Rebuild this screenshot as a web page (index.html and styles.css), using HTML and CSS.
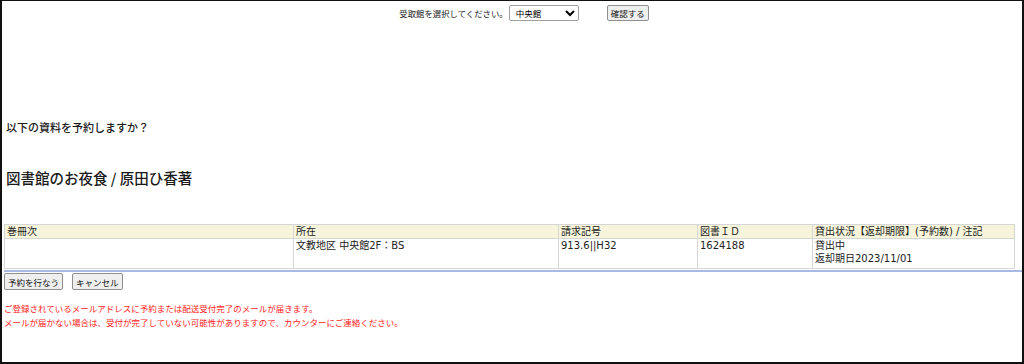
FILE: index.html
```html
<!DOCTYPE html>
<html lang="ja">
<head>
<meta charset="utf-8">
<title>予約確認</title>
<link rel="stylesheet" href="styles.css">
</head>
<body>
<div class="frame">
  <div class="topbar">
    <span class="label">受取館を選択してください。</span>
    <select class="lib-select">
      <option>中央館</option>
    </select>
    <button class="btn confirm">確認する</button>
  </div>

  <p class="question">以下の資料を予約しますか？</p>

  <h1 class="title">図書館のお夜食 / 原田ひ香著</h1>

  <table class="holdings">
    <colgroup>
      <col class="c1"><col class="c2"><col class="c3"><col class="c4"><col class="c5">
    </colgroup>
    <thead>
      <tr>
        <th>巻冊次</th>
        <th>所在</th>
        <th>請求記号</th>
        <th>図書ＩＤ</th>
        <th>貸出状況【返却期限】(予約数) / 注記</th>
      </tr>
    </thead>
    <tbody>
      <tr>
        <td></td>
        <td>文教地区 中央館2F：BS</td>
        <td>913.6||H32</td>
        <td>1624188</td>
        <td>貸出中<br>返却期日2023/11/01</td>
      </tr>
    </tbody>
  </table>
  <div class="rule"></div>

  <div class="actions">
    <button class="btn">予約を行なう</button>
    <button class="btn">キャンセル</button>
  </div>

  <p class="notice">ご登録されているメールアドレスに予約または配送受付完了のメールが届きます。<br>メールが届かない場合は、受付が完了していない可能性がありますので、カウンターにご連絡ください。</p>
</div>
</body>
</html>
```

FILE: styles.css
```css
html, body {
  margin: 0;
  padding: 0;
  background: #fff;
}

body {
  font-family: "DejaVu Sans", "Noto Sans CJK JP", sans-serif;
  color: #222;
}

.frame {
  height: 364px;
  box-sizing: border-box;
  border: 2px solid #111;
  border-top-width: 1px;
  padding: 3px 0 0 2px;
  overflow: hidden;
}

.topbar {
  display: flex;
  justify-content: center;
  align-items: center;
  height: 17px;
  padding-left: 22px;
  font-family: "Noto Sans CJK JP", sans-serif;
  font-size: 8.4px;
}

.label {
  margin-right: 1px;
}

.lib-select {
  width: 70px;
  height: 16px;
  font-family: "Noto Sans CJK JP", sans-serif;
  font-size: 8.5px;
  padding: 0 2px;
  border: 1px solid #a0a0a0;
  border-radius: 2px;
  background: #fff;
  margin-right: 28px;
}

.btn {
  font-family: "Noto Sans CJK JP", sans-serif;
  font-size: 8.5px;
  height: 16px;
  padding: 0 3px;
  border: 1px solid #8f8f8f;
  border-radius: 2px;
  background: #efefef;
  color: #111;
  line-height: 14px;
}

.confirm {
  width: 42px;
  padding: 0;
}

.question {
  margin: 99px 0 0 2px;
  font-family: "Noto Sans CJK JP", sans-serif;
  font-size: 11px;
  font-weight: 500;
  line-height: 14px;
  color: #1a1a1a;
}

.title {
  margin: 34px 0 0 2px;
  font-family: "Noto Sans CJK JP", sans-serif;
  font-size: 14.5px;
  font-weight: 500;
  line-height: 20px;
  color: #1a1a1a;
}

.holdings {
  margin: 36px 0 0 0;
  width: 1010px;
  border-collapse: collapse;
  table-layout: fixed;
  font-size: 10px;
}

.c1 { width: 289px; }
.c2 { width: 265px; }
.c3 { width: 139px; }
.c4 { width: 115px; }
.c5 { width: 202px; }

.holdings th,
.holdings td {
  border: 1px solid #d6d6d6;
  padding: 0 2px;
  text-align: left;
  vertical-align: top;
  line-height: 13px;
  font-weight: normal;
  white-space: nowrap;
}

.holdings th {
  background: #f6f4da;
  height: 13px;
}

.holdings td {
  height: 29px;
}

.rule {
  height: 2px;
  margin: 1px 0 0 0;
  background: #a9b9e2;
}

.actions {
  display: flex;
  gap: 9px;
  margin: 1px 0 0 0;
}

.actions .btn {
  height: 17px;
}

.notice {
  margin: 11px 0 0 0;
  font-family: "Noto Sans CJK JP", sans-serif;
  font-size: 8.5px;
  line-height: 14px;
  color: #f22;
}
```
